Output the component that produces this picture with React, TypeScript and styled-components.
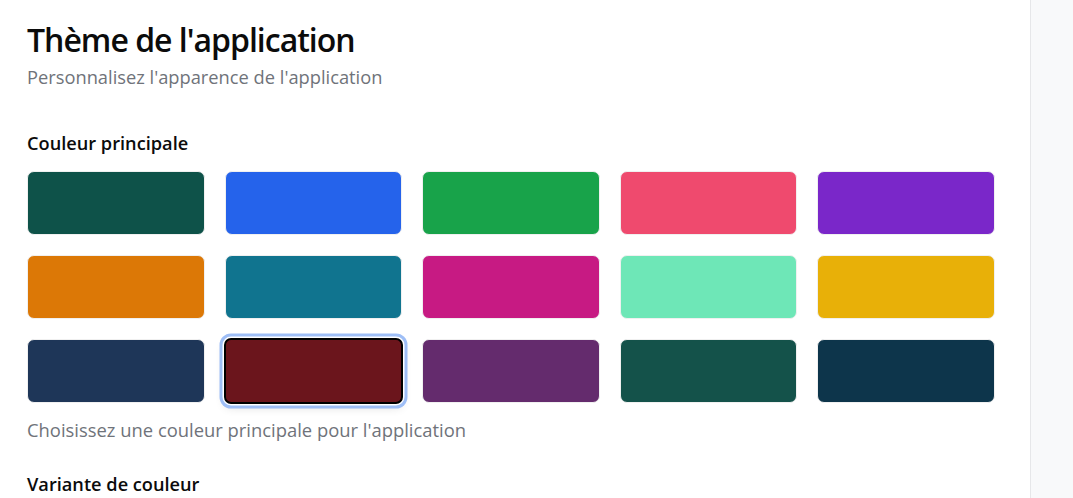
import React from "react";
import styled, { createGlobalStyle } from "styled-components";

const Global = createGlobalStyle`
  html, body { margin: 0; padding: 0; background: #ffffff; }
  body { font-family: "Open Sans", "Noto Sans", sans-serif; color: #111; }
  #root { height: 498px; }
`;

const Layout = styled.div`
  display: flex;
  height: 498px;
  overflow: hidden;
`;

const Main = styled.main`
  width: 1030px;
  flex: none;
  box-sizing: border-box;
  padding: 20px 35px 0 27px;
  background: #fff;
`;

const Aside = styled.aside`
  flex: 1;
  background: #f8f9fa;
  border-left: 1px solid #e6e7e9;
`;

const Title = styled.h1`
  margin: 0;
  font-size: 32px;
  line-height: 40px;
  font-weight: 600;
  color: #0b0b0b;
  letter-spacing: -1px;
`;

const Subtitle = styled.p`
  margin: 5px 0 0;
  font-size: 18.3px;
  line-height: 24px;
  color: #6f737a;
`;

const Section = styled.section<{ $gap: number }>`
  margin-top: ${(p) => p.$gap}px;
`;

const Label = styled.h2`
  margin: 0 0 16px;
  font-size: 18.2px;
  line-height: 24px;
  font-weight: 600;
  color: #0b0b0b;
`;

const Grid = styled.div`
  display: grid;
  grid-template-columns: repeat(5, 1fr);
  column-gap: 20px;
  row-gap: 20px;
`;

const Swatch = styled.button<{ $color: string; $selected?: boolean }>`
  display: block;
  box-sizing: border-box;
  height: ${(p) => (p.$selected ? "66px" : "64px")};
  margin: ${(p) => (p.$selected ? "-1px" : "0")};
  padding: 0;
  border-radius: 7px;
  background: ${(p) => p.$color};
  border: ${(p) => (p.$selected ? "2px solid #000" : "1px solid #f0f0f0")};
  box-shadow: ${(p) =>
    p.$selected
      ? "0 0 0 1.5px #fff, 0 0 0 4.5px #9ebef6, 0 4px 10px rgba(0,0,0,0.12)"
      : "none"};
  cursor: pointer;
`;

const Help = styled.p`
  margin: 15px 0 0;
  font-size: 18.4px;
  line-height: 24px;
  color: #6f737a;
`;

const colors = [
  "#0e5249",
  "#2563eb",
  "#18a34a",
  "#ef4a6e",
  "#7a27c9",
  "#dc7806",
  "#10748f",
  "#c71a83",
  "#6ee7b7",
  "#e8b008",
  "#1e3658",
  "#6b151c",
  "#642b6d",
  "#14524a",
  "#0d354b",
];

export default function App() {
  return (
    <>
      <Global />
      <Layout>
        <Main>
          <Title>Thème de l'application</Title>
          <Subtitle>Personnalisez l'apparence de l'application</Subtitle>
          <Section $gap={42}>
            <Label>Couleur principale</Label>
            <Grid>
              {colors.map((c, i) => (
                <Swatch key={c} $color={c} $selected={i === 11} aria-label={c} />
              ))}
            </Grid>
            <Help>Choisissez une couleur principale pour l'application</Help>
          </Section>
          <Section $gap={30}>
            <Label>Variante de couleur</Label>
          </Section>
        </Main>
        <Aside />
      </Layout>
    </>
  );
}
